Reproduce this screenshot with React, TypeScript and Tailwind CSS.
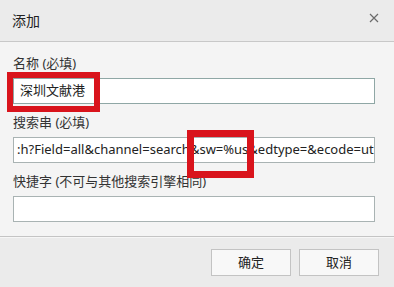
import React from "react";

const font = { fontFamily: '"Noto Sans", "Noto Sans CJK SC", sans-serif' };

export default function App() {
  return (
    <div className="relative w-[394px] h-[287px] overflow-hidden bg-[#f4f4f4] text-[#333]" style={font}>
      {/* header */}
      <div className="h-[42px] bg-[#ebebeb] border-b border-[#c8c8c8] flex items-center justify-between pl-[12px] pr-[10px]">
        <span className="text-[14px] text-[#222] leading-none">添加</span>
        <svg width="10" height="10" viewBox="0 0 10 10" className="mr-[5px] mb-[6px]">
          <path d="M1 1 L9 9 M9 1 L1 9" stroke="#6b6b6b" strokeWidth="1.2" fill="none" />
        </svg>
      </div>
      {/* body */}
      <div className="h-[194px] px-[13px] pt-[11px] flex flex-col">
        <div className="text-[13px] leading-[20px] h-[20px]">名称 (必填)</div>
        <div className="mt-[5px] w-[362px] h-[26px] bg-white border border-[#8fa7a5] flex items-center px-[6px] text-[13px] text-[#222]">
          深圳文献港
        </div>
        <div className="mt-[8px] text-[13px] leading-[20px] h-[20px]">搜索串 (必填)</div>
        <div className="mt-[5px] w-[362px] h-[26px] bg-white border border-[#a9b3b3] flex items-center pl-[3px] overflow-hidden text-[13px] text-[#222] whitespace-nowrap">
          :h?Field=all&amp;channel=search&amp;sw=%us&amp;edtype=&amp;ecode=ut
        </div>
        <div className="mt-[8px] text-[13px] leading-[20px] h-[20px]">快捷字 (不可与其他搜索引擎相同)</div>
        <div className="mt-[5px] w-[362px] h-[26px] bg-white border border-[#a9b3b3]" />
      </div>
      {/* footer */}
      <div className="h-[51px] bg-[#ebebeb] border-t border-[#c4c4c4] shadow-[inset_0_1px_0_#f6f6f6] flex justify-end items-start pt-[12px] pr-[15px] gap-[8px]">
        <button className="w-[80px] h-[27px] bg-[#f8f8f8] border border-[#c3c3c3] text-[13px] text-[#222] flex items-center justify-center">
          确定
        </button>
        <button className="w-[80px] h-[27px] bg-[#f8f8f8] border border-[#c3c3c3] text-[13px] text-[#222] flex items-center justify-center">
          取消
        </button>
      </div>
      {/* red annotation boxes */}
      <div className="absolute left-[7px] top-[72px] w-[93px] h-[40px] border-[6px] border-[#d9141c]" />
      <div className="absolute left-[187px] top-[130px] w-[67px] h-[48px] border-[7px] border-[#d9141c]" />
    </div>
  );
}
